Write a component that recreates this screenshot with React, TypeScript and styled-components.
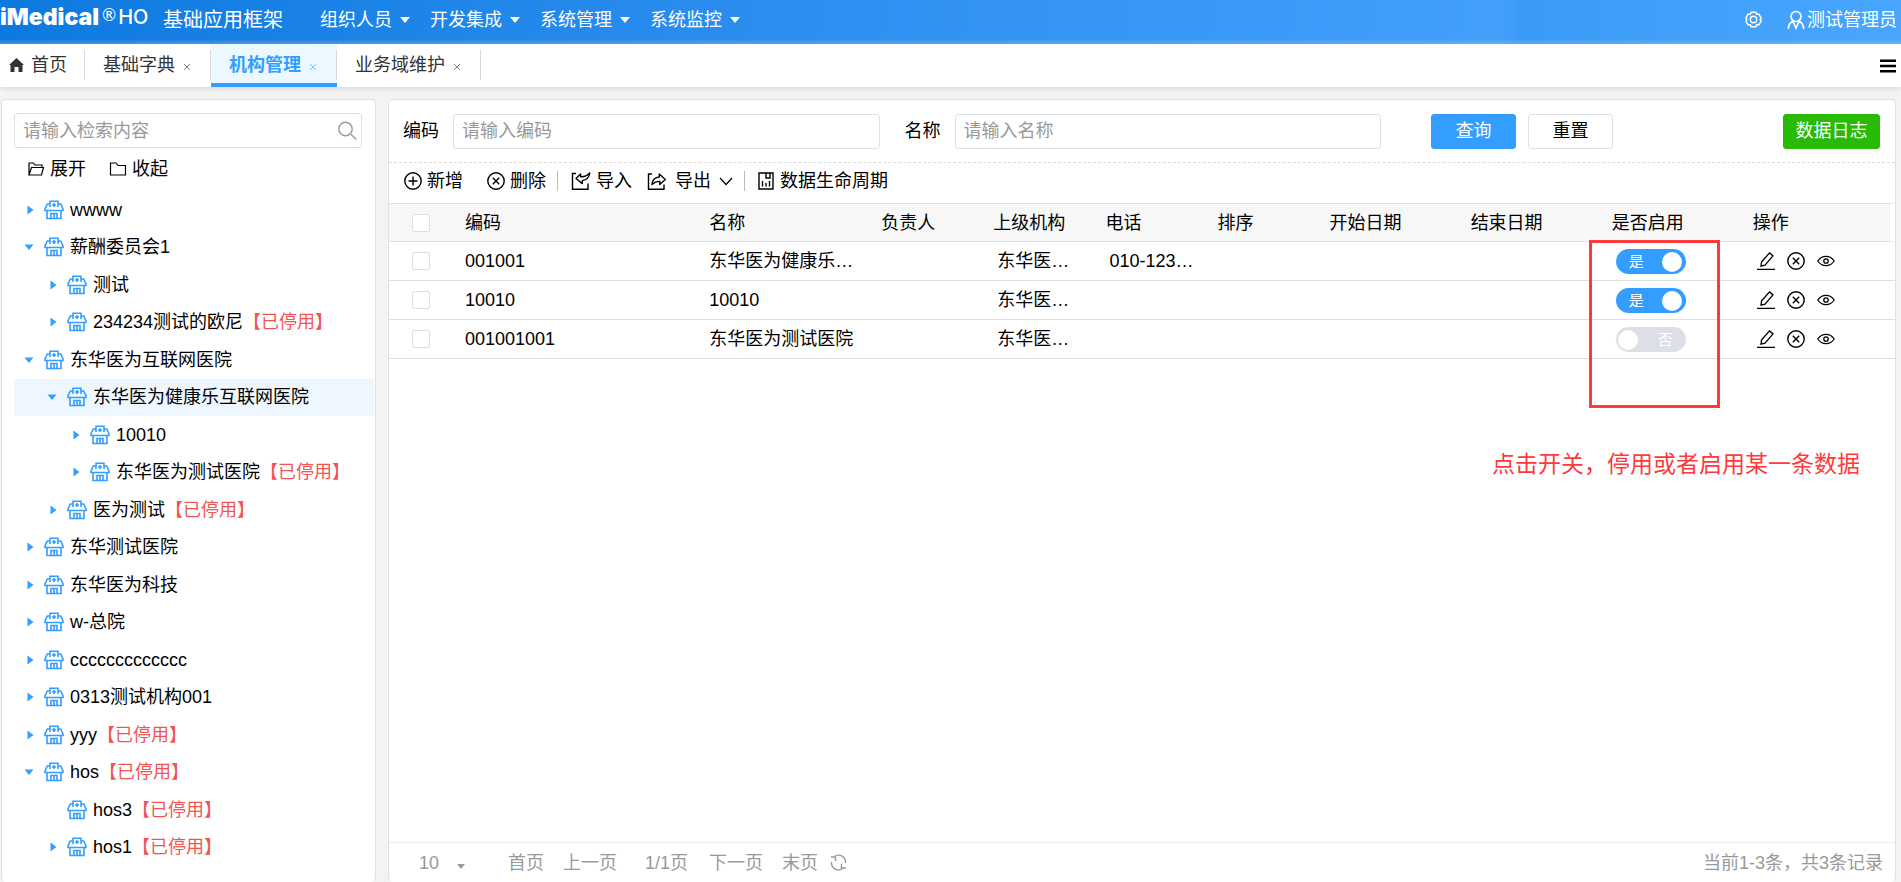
import React from "react";
import styled, { createGlobalStyle, css } from "styled-components";

const blue = "#339eff";
const line = "#e0e0e3";
const field = "#dcdfe6";

const GlobalStyle = createGlobalStyle`
  *, *::before, *::after { box-sizing: border-box; }
  body {
    margin: 0;
    background: #f3f3f3;
    color: #000;
    font-family: "Liberation Sans", "Noto Sans CJK SC", sans-serif;
    font-size: 18px;
    line-height: 24px;
  }
  button, input, select { font: inherit; color: inherit; margin: 0; }
  button { padding: 0; border: 0; background: none; cursor: pointer; white-space: nowrap; }
  a { color: inherit; text-decoration: none; }
`;

const Page = styled.div`
  display: flex;
  flex-direction: column;
  min-height: 100vh;
`;

/* Header */

const Header = styled.header`
  display: flex;
  align-items: center;
  height: 44px;
  padding: 0 4px 10px 0;
  color: #fff;
  background:
    linear-gradient(to top, rgba(225, 225, 225, 0.3), rgba(225, 225, 225, 0) 5px),
    linear-gradient(to right, #0d79df 0%, #2a8dee 38%, #42a0fb 79%, #3a9bf6 80%, #48a6ff 100%);
`;

const Logo = styled.div`
  display: flex;
  align-items: center;
  width: 163px;
  white-space: nowrap;
`;

const Brand = styled.span`
  font-family: Inter, sans-serif;
  font-weight: 900;
  font-size: 23px;
`;

const Registered = styled.span`
  margin: 0 2px 5px 3px;
  font-family: Lato, sans-serif;
  font-size: 17px;
  line-height: 16px;
`;

const Edition = styled.span`
  font-family: Inter, sans-serif;
  font-weight: 500;
  font-size: 20px;
`;

const ProductName = styled.h1`
  margin: 6px 0 0;
  width: 157px;
  font-size: 20px;
  font-weight: 400;
`;

const Menu = styled.nav`
  display: flex;
  flex: 1;
  margin-top: 6px;
`;

const MenuLink = styled.a`
  display: flex;
  align-items: center;
  gap: 8px;
  padding-right: 20px;
`;

const UserArea = styled.div`
  display: flex;
  align-items: center;
  gap: 25px;
  margin-top: 5px;
`;

const HeaderButton = styled.button`
  display: flex;
  align-items: center;
  gap: 2px;
`;

/* Tabs */

const TabBar = styled.nav`
  position: relative;
  display: flex;
  align-items: stretch;
  height: 43px;
  padding-right: 5px;
  background: #fff;
  box-shadow: 0 1px 6px rgba(0, 0, 0, 0.13);
  color: #333;
`;

const Tab = styled.div<{ $active?: boolean; $home?: boolean }>`
  position: relative;
  display: flex;
  align-items: center;
  gap: 8px;
  padding: ${(p) => (p.$home ? "0 18px 2px 9px" : "0 20px 2px 18px")};
  &::after {
    content: "";
    position: absolute;
    right: 0;
    top: 6px;
    width: 1px;
    height: 30px;
    background: #d8d8d8;
  }
  ${(p) =>
    p.$active &&
    css`
      background: #ecf8ff;
      color: ${blue};
      font-weight: 700;
      box-shadow: inset 0 -4px 0 ${blue};
    `}
`;

const TabLink = styled.a`
  display: flex;
  align-items: center;
  gap: 7px;
`;

const CloseButton = styled.button`
  display: flex;
  padding-top: 4px;
  opacity: 0.6;
`;

const MoreButton = styled.button`
  display: flex;
  align-items: center;
  margin-left: auto;
  color: #000;
`;

/* Panels */

const Body = styled.div`
  display: flex;
  flex: 1;
  gap: 12px;
  padding: 12px 5px 0 1px;
`;

const Panel = styled.section`
  display: flex;
  flex-direction: column;
  background: #fff;
  border: 1px solid ${line};
  border-bottom-color: #fff;
  border-radius: 5px;
`;

const SidePanel = styled(Panel)`
  flex: 0 0 375px;
  padding: 13px 1px 15px 12px;
`;

const MainPanel = styled(Panel)`
  position: relative;
  flex: 1;
  min-width: 0;
`;

const inputBox = css`
  height: 35px;
  border: 1px solid ${field};
  border-radius: 3px;
  background: #fff;
`;

const SearchBox = styled.label`
  ${inputBox}
  display: flex;
  align-items: center;
  margin-right: 12px;
  padding: 0 4px 0 8px;
  color: #999;
`;

const SearchInput = styled.input`
  flex: 1;
  min-width: 0;
  padding: 0;
  border: 0;
  outline: 0;
  background: none;
  &::placeholder { color: #999; opacity: 1; }
`;

const TreeActions = styled.div`
  display: flex;
  gap: 23px;
  padding: 9px 13px 10px;
`;

const IconTextButton = styled.button<{ $gap?: number }>`
  display: flex;
  align-items: center;
  gap: ${(p) => p.$gap ?? 5}px;
`;

const Tree = styled.ul`
  display: flex;
  flex: 1;
  flex-direction: column;
  margin: 0;
  padding: 0;
  list-style: none;
`;

const TreeRow = styled.li<{ $level: number; $selected?: boolean }>`
  display: flex;
  flex: 1 1 37px;
  align-items: center;
  max-height: 38px;
  padding-left: ${(p) => 10 + p.$level * 23}px;
  white-space: nowrap;
  background: ${(p) => (p.$selected ? "#eef7ff" : "transparent")};
`;

const Caret = styled.button`
  display: flex;
  width: 10px;
  height: 10px;
  margin-right: 10px;
  color: ${blue};
`;

const NodeLink = styled.a`
  display: flex;
  align-items: center;
  gap: 6px;
`;

const NodeIcon = styled.span`
  display: flex;
  color: ${blue};
`;

const Disabled = styled.span`
  color: #f25454;
`;

/* Filter form */

const FilterForm = styled.form`
  display: flex;
  align-items: center;
  height: 63px;
  padding: 0 15px 0 14px;
  border-bottom: 1px dashed #dcdcdc;
`;

const Field = styled.label`
  display: flex;
  flex: 1;
  align-items: center;
  gap: 14px;
  min-width: 0;
  margin-right: 25px;
  white-space: nowrap;
`;

const FieldInput = styled.input`
  ${inputBox}
  flex: 1;
  min-width: 0;
  padding: 0 8px;
  outline: 0;
  &::placeholder { color: #999; opacity: 1; }
`;

const FormButtons = styled.div`
  display: flex;
  gap: 12px;
  margin: 0 170px 0 25px;
`;

const FormButton = styled.button<{ $kind: "primary" | "plain" | "success" }>`
  height: 35px;
  width: ${(p) => (p.$kind === "success" ? 97 : 85)}px;
  border-radius: 3px;
  border: 1px solid ${(p) => ({ primary: blue, plain: field, success: "#28ba05" })[p.$kind]};
  background: ${(p) => ({ primary: blue, plain: "#fff", success: "#28ba05" })[p.$kind]};
  color: ${(p) => (p.$kind === "plain" ? "#000" : "#fff")};
`;

const Toolbar = styled.div`
  display: flex;
  align-items: center;
  height: 40px;
  padding: 0 15px 4px;
`;

const ToolGroup = styled.div<{ $gap: number }>`
  display: flex;
  gap: ${(p) => p.$gap}px;
`;

const Separator = styled.span`
  width: 1px;
  height: 20px;
  margin: 0 13px 0 11px;
  background: #bbb;
`;

/* Data table */

const TableArea = styled.div`
  flex: 1;
`;

const Table = styled.table`
  width: 100%;
  table-layout: fixed;
  border-collapse: separate;
  border-spacing: 0;
`;

const cell = css<{ $inset?: boolean }>`
  height: 39px;
  padding: 0 8px 0 ${(p) => (p.$inset ? 12 : 8)}px;
  border-bottom: 1px solid ${line};
  text-align: left;
  font-weight: 400;
  white-space: nowrap;
`;

const Th = styled.th`
  ${cell}
  border-top: 1px solid ${line};
  background: #f7f7f7;
  &:last-child { border-right: 5px solid #fff; }
`;

const Td = styled.td`
  ${cell}
`;

const CheckCell = styled.div`
  display: flex;
  padding-left: 15px;
`;

const Checkbox = styled.input`
  appearance: none;
  width: 18px;
  height: 18px;
  border: 1px solid ${field};
  border-radius: 2px;
  background: #fff;
`;

const Toggle = styled.label<{ $on: boolean }>`
  display: flex;
  flex-direction: ${(p) => (p.$on ? "row-reverse" : "row")};
  align-items: center;
  justify-content: space-between;
  width: 70px;
  height: 25px;
  margin-top: 1px;
  padding: ${(p) => (p.$on ? "0 4px 0 13px" : "0 13px 0 2px")};
  border-radius: 13px;
  background: ${(p) => (p.$on ? blue : "#dcdfe6")};
  color: #fff;
  font-size: 15px;
`;

const ToggleInput = styled.input`
  appearance: none;
  width: 20px;
  height: 20px;
  border-radius: 50%;
  background: #fff;
`;

const RowActions = styled.div`
  display: flex;
  align-items: center;
  gap: 12px;
`;

const RowAction = styled.button`
  display: flex;
`;

/* Pagination */

const Pager = styled.footer`
  display: flex;
  align-items: center;
  height: 39px;
  padding: 1px 12px 0 22px;
  border-top: 1px solid #ebebf0;
  color: #999;
`;

const PageSize = styled.label`
  display: flex;
  align-items: center;
  width: 97px;
`;

const SizeSelect = styled.select`
  appearance: none;
  width: 46px;
  padding: 0 0 0 8px;
  border: 0;
  background: none;
`;

const SizeArrow = styled.span`
  display: flex;
  padding-top: 8px;
`;

const PageLinks = styled.div`
  display: flex;
  flex: 1;
  align-items: center;
  gap: 19px;
`;

const PageNumber = styled.span`
  margin: 0 2px 0 9px;
`;

const RefreshButton = styled.button`
  display: flex;
  margin-left: -7px;
`;

/* Red annotation laid over the table */

const Highlight = styled.div`
  position: absolute;
  top: 140px;
  right: 175px;
  width: 131px;
  height: 168px;
  border: 3px solid #ff3a3a;
  pointer-events: none;
`;

const Note = styled.p`
  position: absolute;
  top: 348px;
  right: 35px;
  margin: 0;
  color: #ff3a3a;
  font-size: 23px;
  line-height: 32px;
  white-space: nowrap;
`;

/* Icons */

type IconProps = { w?: number; h?: number; vb?: string; sw?: number; fill?: string; children: React.ReactNode };

const Icon = ({ w = 18, h = w, vb = `0 0 ${w} ${h}`, sw = 1.4, fill = "none", children }: IconProps) => (
  <svg width={w} height={h} viewBox={vb} fill={fill} stroke={fill === "none" ? "currentColor" : "none"} strokeWidth={sw} aria-hidden="true">
    {children}
  </svg>
);

const DownArrow = ({ w = 10, h = 6 }) => (
  <Icon w={w} h={h} vb="0 0 10 6" fill="currentColor"><path d="M0 0h10L5 6z" /></Icon>
);
const RightArrow = () => (
  <Icon w={10} fill="currentColor"><path d="M3.500 0.500l6 4.500-6 4.500z" /></Icon>
);
const TreeDown = () => (
  <Icon w={10} fill="currentColor"><path d="M0.500 2.500h9L5 8z" /></Icon>
);
const CloseX = () => (
  <Icon w={8} sw={1}><path d="M1 1l6 6M7 1l-6 6" /></Icon>
);
const GearIcon = () => (
  <Icon w={17} sw={1.4}>
    <path d="M6.200 1.300h4.600l1 1.900 2.200.1 2.200 3.900-1.200 1.300 1.200 1.300-2.200 3.900-2.200.1-1 1.900H6.200l-1-1.900-2.200-.1L.8 9.800 2 8.500.8 7.200 3 3.300l2.200-.1z" />
    <circle cx="8.500" cy="8.500" r="3.200" />
  </Icon>
);
const UserIcon = () => (
  <Icon w={18} h={20} sw={1.7}>
    <circle cx="9" cy="6.500" r="5" />
    <path d="M6 11C3 12.500 1.500 15 1.300 19M12 11c3 1.500 4.500 4 4.700 8M6 11.500l3 6.500 3-6.500" />
  </Icon>
);
const HomeIcon = () => (
  <Icon w={15} h={14} fill="currentColor">
    <path d="M7.500 0L15 7h-1.500v7H9.500V9h-4v5H1.500V7H0z" />
  </Icon>
);
const BurgerIcon = () => (
  <Icon w={16} h={14} sw={2.600}><path d="M0 1.800h16M0 7h16M0 12.200h16" /></Icon>
);
const SearchIcon = () => (
  <Icon w={20} sw={1.400}><circle cx="8.500" cy="8" r="6.700" /><path d="M13.300 12.800l6 5.700" /></Icon>
);
const FolderOpenIcon = () => (
  <Icon w={18} h={16} sw={1.200}>
    <path d="M2 14V2h4.500l1.500 2h7v2.500M2 14l2.500-7.500H16.500L14.500 14z" />
  </Icon>
);
const FolderIcon = () => (
  <Icon w={18} h={16} sw={1.200}><path d="M1.500 14V2H7l2 2.500h7.500V14z" /></Icon>
);
const HospitalIcon = () => (
  <Icon w={20} vb="0 0 20 20" sw={1.6}>
    <path d="M6 4H3.300L1 9v1.500h18V9l-2.300-5H14M6 7V1.200h8V7M3 10.500v8h14v-8M7 18.500v-5h6v5M10 13.500v5M10 3v4M8 5h4" />
  </Icon>
);
const AddIcon = () => (
  <Icon><circle cx="9" cy="9" r="8.200" /><path d="M9 4.500v9M4.500 9h9" /></Icon>
);
const DeleteIcon = () => (
  <Icon><circle cx="9" cy="9" r="8.200" /><path d="M5.800 5.800l6.400 6.400M12.200 5.800l-6.400 6.400" /></Icon>
);
const ImportIcon = () => (
  <Icon w={20} h={18}>
    <path d="M5 1.500H1.500v15.700h15.500V11.500" />
    <path d="M18.800 1c-.6 4-3 7-7.500 7.600v3L5 6.500 9.600 2v2.700c3.500.3 6.500-1 9.200-3.700z" strokeLinejoin="round" />
  </Icon>
);
const ExportIcon = () => (
  <Icon w={20} h={18}>
    <path d="M5 2H1.500v15.200h15.500V12.500" />
    <path d="M5 12.500C5.500 8 8 5.200 12.300 5V2l6 5.500-5.500 5V9.400C9.800 9.200 7.500 10.200 5 12.500z" strokeLinejoin="round" />
  </Icon>
);
const ChevronIcon = () => (
  <Icon w={14} h={9} sw={1.200}><path d="M1 1l6 6.500L13 1" /></Icon>
);
const ReportIcon = () => (
  <Icon w={16} h={18} sw={1.400}>
    <path d="M1 1h14v16H1zM8 1v5h4V1M4.500 9v5.500M8 11v3.500M11.500 9v5.500" />
  </Icon>
);
const EditIcon = () => (
  <Icon w={18} h={18} sw={1.300}>
    <path d="M4.500 10L12.500 0.900l3.500 3-8 9.300-4 1zM0 17.300h18" />
  </Icon>
);
const EyeIcon = () => (
  <Icon w={18} sw={1.300}>
    <path d="M.8 9C5 2.800 13 2.800 17.200 9 13 15.200 5 15.200.8 9z" />
    <circle cx="9" cy="9" r="2.200" />
  </Icon>
);
const RefreshIcon = () => (
  <Icon w={17} sw={1.400}>
    <path d="M4.500 2.500A7 7 0 0 1 15.500 9M12.500 14.500A7 7 0 0 1 1.500 8M1 3h4.500v4M16 14h-4.500v-4" />
  </Icon>
);

/* Data */

type TreeNode = { name: string; level: number; state: "open" | "closed" | "leaf"; off?: boolean; selected?: boolean };

const nodes: TreeNode[] = [
  { name: "wwww", level: 0, state: "closed" },
  { name: "薪酬委员会1", level: 0, state: "open" },
  { name: "测试", level: 1, state: "closed" },
  { name: "234234测试的欧尼", level: 1, state: "closed", off: true },
  { name: "东华医为互联网医院", level: 0, state: "open" },
  { name: "东华医为健康乐互联网医院", level: 1, state: "open", selected: true },
  { name: "10010", level: 2, state: "closed" },
  { name: "东华医为测试医院", level: 2, state: "closed", off: true },
  { name: "医为测试", level: 1, state: "closed", off: true },
  { name: "东华测试医院", level: 0, state: "closed" },
  { name: "东华医为科技", level: 0, state: "closed" },
  { name: "w-总院", level: 0, state: "closed" },
  { name: "ccccccccccccc", level: 0, state: "closed" },
  { name: "0313测试机构001", level: 0, state: "closed" },
  { name: "yyy", level: 0, state: "closed", off: true },
  { name: "hos", level: 0, state: "open", off: true },
  { name: "hos3", level: 1, state: "leaf", off: true },
  { name: "hos1", level: 1, state: "closed", off: true },
];

const columns = [
  { title: "编码", width: 244 },
  { title: "名称", width: 172 },
  { title: "负责人", width: 112 },
  { title: "上级机构", width: 112 },
  { title: "电话", width: 112 },
  { title: "排序", width: 112 },
  { title: "开始日期", width: 141 },
  { title: "结束日期", width: 141 },
  { title: "是否启用", width: 141 },
  { title: "操作", width: 150 },
];

const rows = [
  { code: "001001", name: "东华医为健康乐…", parent: "东华医…", phone: "010-123…", on: true },
  { code: "10010", name: "10010", parent: "东华医…", phone: "", on: true },
  { code: "001001001", name: "东华医为测试医院", parent: "东华医…", phone: "", on: false },
];

export default function App() {
  return (
    <Page>
      <GlobalStyle />
      <Header>
        <Logo>
          <Brand>iMedical</Brand>
          <Registered>®</Registered>
          <Edition>HO</Edition>
        </Logo>
        <ProductName>基础应用框架</ProductName>
        <Menu>
          {["组织人员", "开发集成", "系统管理", "系统监控"].map((m) => (
            <MenuLink href="#" key={m}>{m}<DownArrow /></MenuLink>
          ))}
        </Menu>
        <UserArea>
          <HeaderButton aria-label="设置"><GearIcon /></HeaderButton>
          <HeaderButton><UserIcon />测试管理员</HeaderButton>
        </UserArea>
      </Header>

      <TabBar>
        <Tab $home><TabLink href="#"><HomeIcon />首页</TabLink></Tab>
        {["基础字典", "机构管理", "业务域维护"].map((t, i) => (
          <Tab key={t} $active={i === 1}>
            <TabLink href="#">{t}</TabLink>
            <CloseButton aria-label={`关闭${t}`}><CloseX /></CloseButton>
          </Tab>
        ))}
        <MoreButton aria-label="更多"><BurgerIcon /></MoreButton>
      </TabBar>

      <Body>
        <SidePanel>
          <SearchBox>
            <SearchInput placeholder="请输入检索内容" aria-label="检索内容" />
            <SearchIcon />
          </SearchBox>
          <TreeActions>
            <IconTextButton><FolderOpenIcon />展开</IconTextButton>
            <IconTextButton><FolderIcon />收起</IconTextButton>
          </TreeActions>
          <Tree>
            {nodes.map((n) => (
              <TreeRow key={n.name} $level={n.level} $selected={n.selected}>
                <Caret aria-label={n.name} disabled={n.state === "leaf"}>
                  {n.state === "open" && <TreeDown />}
                  {n.state === "closed" && <RightArrow />}
                </Caret>
                <NodeLink href="#">
                  <NodeIcon><HospitalIcon /></NodeIcon>
                  <span>{n.name}{n.off && <Disabled>【已停用】</Disabled>}</span>
                </NodeLink>
              </TreeRow>
            ))}
          </Tree>
        </SidePanel>

        <MainPanel>
          <FilterForm onSubmit={(e) => e.preventDefault()}>
            <Field>编码<FieldInput placeholder="请输入编码" /></Field>
            <Field>名称<FieldInput placeholder="请输入名称" /></Field>
            <FormButtons>
              <FormButton $kind="primary">查询</FormButton>
              <FormButton $kind="plain" type="reset">重置</FormButton>
            </FormButtons>
            <FormButton $kind="success" type="button">数据日志</FormButton>
          </FilterForm>

          <Toolbar>
            <ToolGroup $gap={24}>
              <IconTextButton><AddIcon />新增</IconTextButton>
              <IconTextButton><DeleteIcon />删除</IconTextButton>
            </ToolGroup>
            <Separator />
            <ToolGroup $gap={15}>
              <IconTextButton><ImportIcon />导入</IconTextButton>
              <IconTextButton $gap={8}><ExportIcon />导出<ChevronIcon /></IconTextButton>
            </ToolGroup>
            <Separator />
            <IconTextButton $gap={6}><ReportIcon />数据生命周期</IconTextButton>
          </Toolbar>

          <TableArea>
            <Table>
              <colgroup>
                <col width={68} />
                {columns.map((c) => <col key={c.title} width={c.width} />)}
              </colgroup>
              <thead>
                <tr>
                  <Th><CheckCell><Checkbox type="checkbox" aria-label="全选" /></CheckCell></Th>
                  {columns.map((c) => <Th key={c.title}>{c.title}</Th>)}
                </tr>
              </thead>
              <tbody>
                {rows.map((r) => (
                  <tr key={r.code}>
                    <Td><CheckCell><Checkbox type="checkbox" aria-label={`选择${r.code}`} /></CheckCell></Td>
                    <Td>{r.code}</Td>
                    <Td>{r.name}</Td>
                    <Td $inset />
                    <Td $inset>{r.parent}</Td>
                    <Td $inset>{r.phone}</Td>
                    <Td $inset />
                    <Td $inset />
                    <Td $inset />
                    <Td $inset>
                      <Toggle $on={r.on}>
                        <ToggleInput type="checkbox" role="switch" defaultChecked={r.on} />
                        {r.on ? "是" : "否"}
                      </Toggle>
                    </Td>
                    <Td $inset>
                      <RowActions>
                        <RowAction aria-label="编辑"><EditIcon /></RowAction>
                        <RowAction aria-label="删除"><DeleteIcon /></RowAction>
                        <RowAction aria-label="查看"><EyeIcon /></RowAction>
                      </RowActions>
                    </Td>
                  </tr>
                ))}
              </tbody>
            </Table>
          </TableArea>

          <Pager>
            <PageSize>
              <SizeSelect aria-label="每页条数" defaultValue="10">
                <option>10</option>
                <option>20</option>
                <option>50</option>
              </SizeSelect>
              <SizeArrow><DownArrow w={8} h={5} /></SizeArrow>
            </PageSize>
            <PageLinks>
              <button>首页</button>
              <button>上一页</button>
              <PageNumber>1/1页</PageNumber>
              <button>下一页</button>
              <button>末页</button>
              <RefreshButton aria-label="刷新"><RefreshIcon /></RefreshButton>
            </PageLinks>
            <span>当前1-3条，共3条记录</span>
          </Pager>

          <Highlight />
          <Note>点击开关，停用或者启用某一条数据</Note>
        </MainPanel>
      </Body>
    </Page>
  );
}
